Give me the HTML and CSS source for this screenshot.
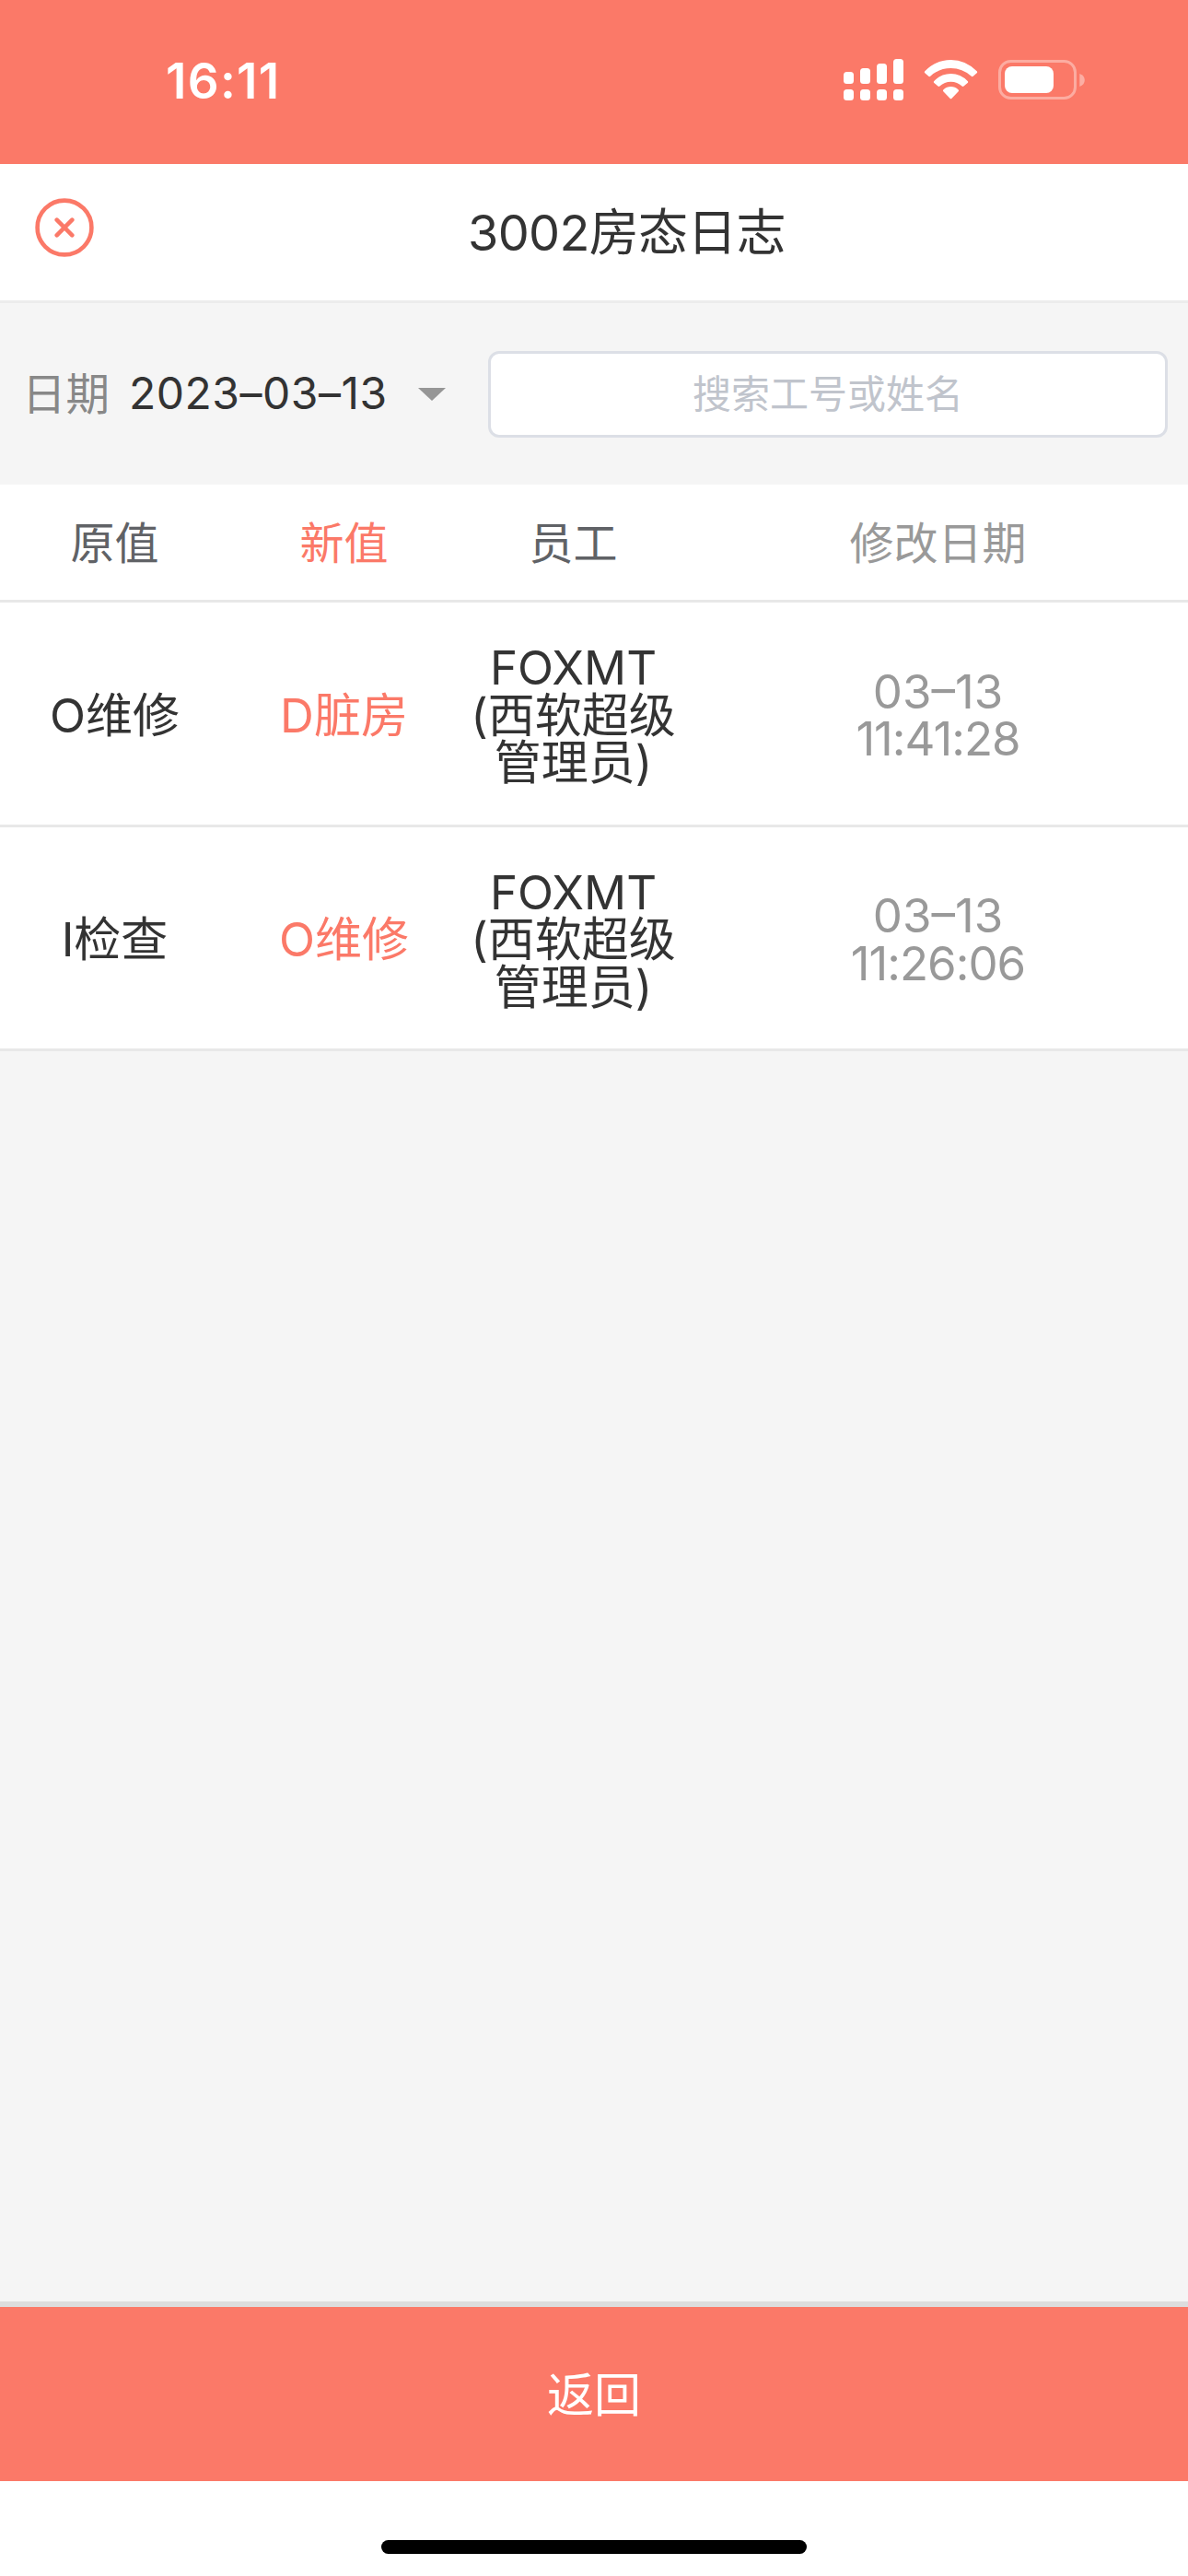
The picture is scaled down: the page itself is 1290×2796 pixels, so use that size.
FILE: index.html
```html
<!DOCTYPE html>
<html lang="zh-CN">
<head>
  <meta charset="utf-8">
  <title>3002房态日志</title>
  <link rel="stylesheet" href="styles.css">
</head>
<body>
  <div class="page">
    <div class="status-bar">
      <div class="time">16:11</div>
      <svg class="status-icons" viewBox="0 0 264 48" fill="#fff">
        <!-- signal -->
        <rect x="0" y="16" width="11" height="13" rx="3.5"/>
        <rect x="18" y="12" width="11" height="17" rx="3.5"/>
        <rect x="36" y="7" width="11" height="22" rx="3.5"/>
        <rect x="54" y="2" width="11" height="27" rx="3.5"/>
        <rect x="0" y="35" width="11" height="12" rx="3.5"/>
        <rect x="18" y="35" width="11" height="12" rx="3.5"/>
        <rect x="36" y="35" width="11" height="12" rx="3.5"/>
        <rect x="54" y="35" width="11" height="12" rx="3.5"/>
        <!-- wifi -->
        <path d="M88.3 15.3Q87.3 16.3 88.3 17.3L92.3 20.8Q93.3 21.5 94.2 20.7Q104 12 116.5 12Q129 12 138.8 20.7Q139.7 21.5 140.7 20.8L144.7 17.3Q145.7 16.3 144.7 15.3Q132.5 3 116.5 3Q100.5 3 88.3 15.3Z"/>
        <path d="M98.3 26Q97.3 27 98.3 28L102.5 31.5Q103.5 32.3 104.4 31.5Q109.5 26.8 116.5 26.8Q123.5 26.8 128.6 31.5Q129.5 32.3 130.5 31.5L134.7 28Q135.7 27 134.7 26Q127 18 116.5 18Q106 18 98.3 26Z"/>
        <path d="M108.3 37.3Q107.4 36.3 108.5 35.3Q112 32 116.5 32Q121 32 124.5 35.3Q125.6 36.3 124.7 37.3L117.5 44.7Q116.5 45.7 115.5 44.7Z"/>
        <!-- battery -->
        <rect x="169.5" y="4.5" width="82" height="40" rx="12" fill="none" stroke="#fff" stroke-width="3" opacity=".38"/>
        <rect x="175" y="10" width="53" height="29" rx="8"/>
        <path d="M256.3 18Q261.8 20 261.8 25Q261.8 30 256.3 32Z" opacity=".4"/>
      </svg>
    </div>

    <div class="nav-bar">
      <svg class="close-icon" viewBox="0 0 64 64" fill="none" stroke="#fb7968" stroke-linecap="round">
        <circle cx="32" cy="32" r="29.4" stroke-width="4.6"/>
        <path d="M23.7 23.7L40.3 40.3M40.3 23.7L23.7 40.3" stroke-width="4.6"/>
      </svg>
      <h1 class="nav-title">3002房态日志</h1>
    </div>

    <div class="filter-bar">
      <span class="filter-label">日期</span>
      <span class="filter-date">2023–03–13</span>
      <span class="arrow"></span>
      <input class="search" type="text" placeholder="搜索工号或姓名">
    </div>

    <div class="log">
      <div class="row row-head">
        <div>原值</div>
        <div class="new">新值</div>
        <div>员工</div>
        <div class="date">修改日期</div>
      </div>
      <div class="row">
        <div>O维修</div>
        <div class="new">D脏房</div>
        <div>FOXMT<br>(西软超级<br>管理员)</div>
        <div class="date">03–13<br><span class="clock">11:41:28</span></div>
      </div>
      <div class="row">
        <div>I检查</div>
        <div class="new">O维修</div>
        <div>FOXMT<br>(西软超级<br>管理员)</div>
        <div class="date">03–13<br><span class="clock">11:26:06</span></div>
      </div>
    </div>

    <button class="back-button" type="button">返回</button>
    <div class="home-area"><div class="home-indicator"></div></div>
  </div>
</body>
</html>
```
FILE: styles.css
```css
:root {
  --primary: #fb7968;
  --text: #333;
  --text-head: #606266;
  --text-light: #999;
  --line: #e8e8e8;
  --bg: #f5f5f5;
}

* {
  margin: 0;
  padding: 0;
  box-sizing: border-box;
}

body {
  font-family: Inter, "Noto Sans CJK SC", sans-serif;
  color: var(--text);
  background: var(--bg);
}

.page {
  display: flex;
  flex-direction: column;
  width: 1290px;
  height: 2796px;
}

/* Status bar */
.status-bar {
  display: flex;
  align-items: flex-start;
  justify-content: space-between;
  height: 178px;
  padding: 62px 110px 0 180px;
  background: var(--primary);
}

.time {
  color: #fff;
  font-size: 53px;
  line-height: 53px;
  font-weight: 600;
  letter-spacing: 1.3px;
}

.status-icons {
  width: 264px;
  height: 48px;
}

/* Title */
.nav-bar {
  display: flex;
  align-items: center;
  height: 151px;
  padding-left: 38px;
  background: #fff;
  border-bottom: 3px solid #ececec;
}

.close-icon {
  width: 64px;
  height: 64px;
  margin-top: -11px;
}

.nav-title {
  flex: 1;
  padding: 0 31px 7px 0;
  font-size: 54px;
  font-weight: 400;
  letter-spacing: -0.7px;
  text-align: center;
}

/* Date and search */
.filter-bar {
  display: flex;
  align-items: center;
  height: 197px;
  padding: 0 22px 0 24px;
  font-size: 48px;
}

.filter-label {
  padding-bottom: 6px;
  font-size: 47.5px;
  color: #888;
}

.filter-date {
  width: 284px;
  margin-left: 21px;
  padding-bottom: 2px;
  letter-spacing: 0.5px;
}

.arrow {
  margin-left: 30px;
  border: 15px solid transparent;
  border-top: 14px solid #969696;
  border-bottom: 0;
}

.search {
  flex: 0 0 738px;
  height: 94px;
  margin-left: auto;
  border: 3px solid #dcdfe6;
  border-radius: 12px;
  background: #fff;
  font: inherit;
  font-size: 42px;
  text-align: center;
}

.search::placeholder {
  color: #c0c4cc;
}

/* Log table */
.log {
  flex: 1;
}

.row {
  display: grid;
  grid-template-columns: 249px 249px 249px 1fr;
  align-items: center;
  height: 243.5px;
  padding-top: 4px;
  background: #fff;
  border-bottom: 3px solid var(--line);
  font-size: 51px;
  line-height: 51.5px;
  text-align: center;
}

.row-head {
  height: 128px;
  padding-top: 2px;
  color: var(--text-head);
  font-size: 48px;
}

.row .new {
  color: var(--primary);
}

.row .date {
  color: var(--text-light);
}

.clock {
  letter-spacing: -1px;
}

/* Bottom */
.back-button {
  height: 195px;
  padding-bottom: 5px;
  border: 0;
  border-top: 6px solid #ddd;
  background: var(--primary);
  color: #fff;
  font: inherit;
  font-size: 51px;
}

.home-area {
  display: flex;
  justify-content: center;
  height: 103px;
  padding-top: 64px;
  background: #fff;
}

.home-indicator {
  width: 462px;
  height: 15px;
  border-radius: 8px;
  background: #000;
}
```
